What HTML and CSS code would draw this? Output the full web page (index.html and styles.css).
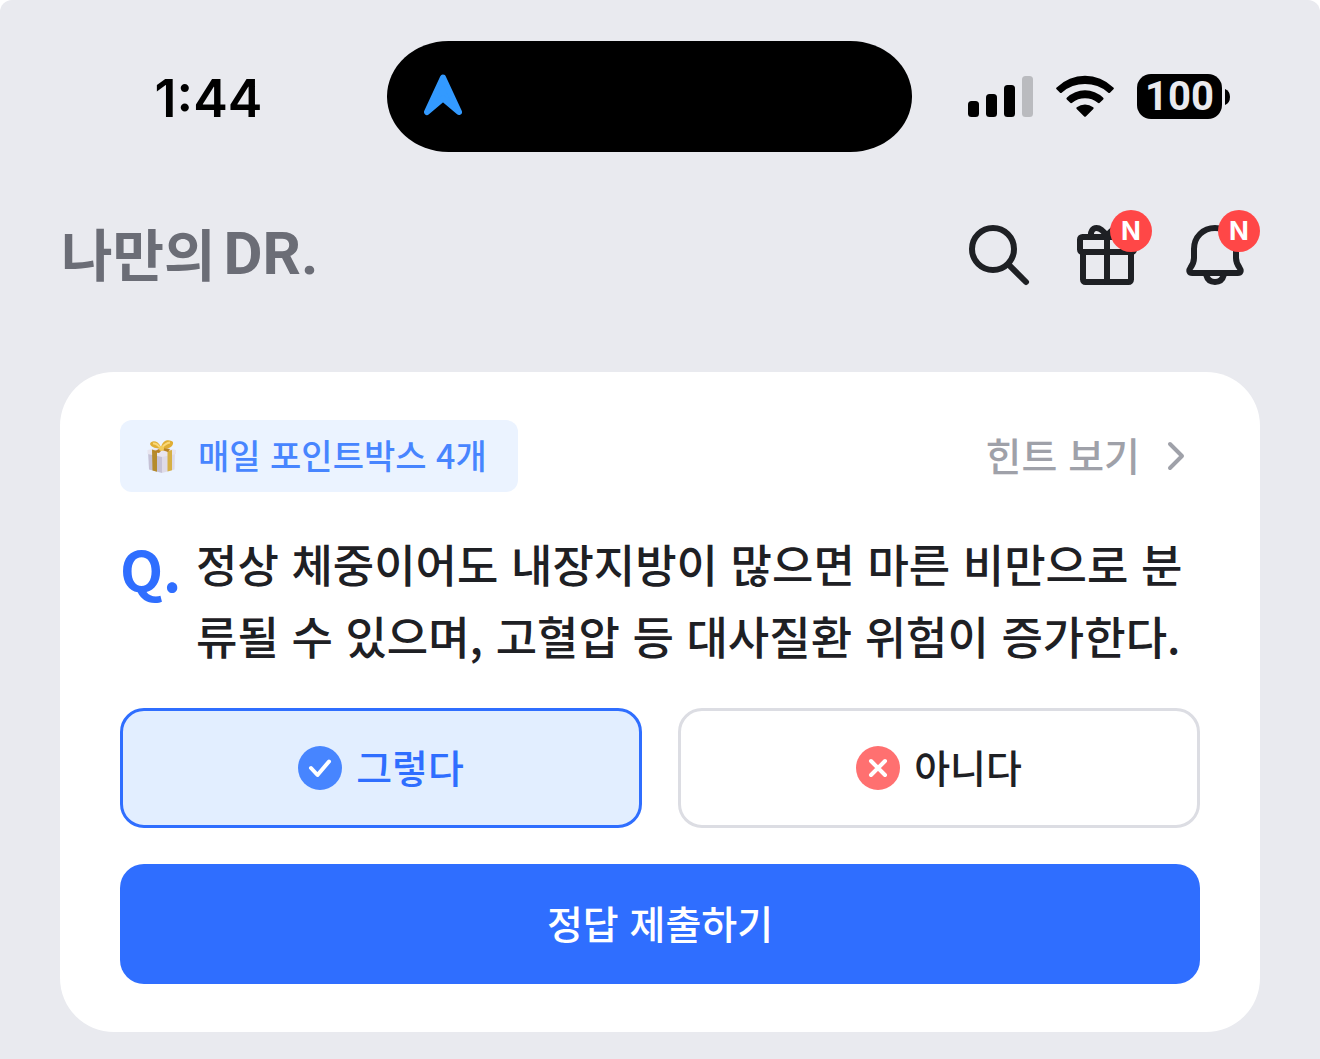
FILE: index.html
```
<!DOCTYPE html>
<html lang="ko">
<head>
  <meta charset="UTF-8" />
  <meta name="viewport" content="width=device-width, initial-scale=1.0" />
  <title>나만의 DR.</title>
  <link rel="stylesheet" href="styles.css">
</head>
<body>
  <div class="screen">
    <div class="status-bar">
      <div class="time">1:44</div>
      <div class="island">
        <svg width="38" height="42" viewBox="0 0 38 42">
          <path d="M19 3.5 L35 38 L19 24.5 L3 38 Z" fill="#339aff" stroke="#339aff" stroke-width="6" stroke-linejoin="round"/>
        </svg>
      </div>
      <div class="status-icons">
        <svg width="65" height="42" viewBox="0 0 65 42">
          <rect x="0" y="25" width="11" height="16" rx="3.5"/>
          <rect x="18" y="18" width="11" height="23" rx="3.5"/>
          <rect x="36" y="9" width="11" height="32" rx="3.5"/>
          <rect x="54" y="0" width="11" height="41" rx="3.5" fill="#babbbf"/>
        </svg>
        <svg width="58" height="44" viewBox="0 0 58 44">
          <path d="M1 12.2A40 40 0 0 1 57 12.2Q58.5 13.2 57.4 14.3L54.2 17.5Q53.2 18.5 52 17.5A35 35 0 0 0 6 17.5Q4.8 18.5 3.8 17.5L.6 14.3Q-.5 13.2 1 12.2Z"/>
          <path d="M11 22.6A26 26 0 0 1 47 22.6Q48.2 23.5 47.2 24.5L44 27.6Q43 28.6 41.8 27.7A21 21 0 0 0 16.2 27.7Q15 28.6 14 27.6L10.8 24.5Q9.8 23.5 11 22.6Z"/>
          <path d="M20.8 32.2A14 14 0 0 1 37.2 32.2Q38.2 33 37.3 33.9L29.8 41.4Q29 42.2 28.2 41.4L20.7 33.9Q19.8 33 20.8 32.2Z"/>
        </svg>
        <div class="battery">
          <span class="battery-level">100</span>
          <svg width="5" height="16" viewBox="0 0 5 16"><path d="M0 0Q5 2 5 8Q5 14 0 16Z"/></svg>
        </div>
      </div>
    </div>

    <header class="header">
      <h1 class="logo">나만의<span class="logo-dr">DR.</span></h1>
      <nav class="actions">
        <button type="button" class="icon-btn" aria-label="검색">
          <svg class="icon" viewBox="0 0 24 24"><circle cx="10" cy="10" r="7"/><path d="M15.2 15.2L21 21"/></svg>
        </button>
        <button type="button" class="icon-btn" aria-label="선물">
          <svg class="icon" viewBox="0 0 24 24">
            <rect x="3" y="6" width="18" height="5" rx=".8"/>
            <rect x="4" y="11" width="16" height="10" rx=".8"/>
            <path d="M12 6v15M6.7 6C6.4 4.2 7.2 3 8.5 3C10 3 11 4.2 12 5.8C13 4.2 14 3 15.5 3C16.8 3 17.6 4.2 17.3 6"/>
          </svg>
          <span class="badge">N</span>
        </button>
        <button type="button" class="icon-btn" aria-label="알림">
          <svg class="icon" viewBox="0 0 24 24">
            <path d="M12 3C8 3 5 6 5 10V13C5 14.6 4.5 15.3 3.8 16.3C3.1 17.3 3.5 18 4.4 18H19.6C20.5 18 20.9 17.3 20.2 16.3C19.5 15.3 19 14.6 19 13V10C19 6 16 3 12 3Z"/>
            <path d="M9 18.5C9.4 20 10.5 21 12 21S14.6 20 15 18.5"/>
          </svg>
          <span class="badge">N</span>
        </button>
      </nav>
    </header>

    <main class="card">
      <div class="card-top">
        <div class="tag">
          <svg width="36" height="36" viewBox="0 0 36 36">
            <path d="M4 13L18 16V35L5 31.5Z" fill="#c6c2d6"/>
            <path d="M18 16L31 13L30.5 31.5L18 35Z" fill="#dedbe8"/>
            <path d="M3.5 12L18 9L32 12V16L18 19L3.5 16Z" fill="#e8e5ef"/>
            <path d="M8 11.5L13 13V33.7L8.5 32.5Z" fill="#b58b2c"/>
            <path d="M23.5 13L28 12V32.3L23.5 33.6Z" fill="#d6b044"/>
            <path d="M17 11C13 10 7 10 6 6C7 2 14 2 17 9C19 1 26 1 29 4C30 9 23 12 17 11Z" fill="#e0ae35"/>
            <path d="M17 10L9 14L15 15L18 12L24 14L26 11Z" fill="#b98325"/>
            <path d="M9 5.5C12 5 14 7 16 9.5M26 4.5C22 5 20 7 18 9.5" fill="none" stroke="#fbd877" stroke-width="2"/>
            <circle cx="17.5" cy="10.5" r="2.5" fill="#f2cb5c"/>
          </svg>
          <span class="label">매일 포인트박스 4개</span>
        </div>
        <a href="#" class="hint">
          <span class="label">힌트 보기</span>
          <svg width="48" height="48" viewBox="0 0 48 48"><path d="M18 12L30 24L18 36"/></svg>
        </a>
      </div>

      <div class="question">
        <span class="q-mark">Q.</span>
        <p class="q-text">정상 체중이어도 내장지방이 많으면 마른 비만으로 분류될 수 있으며, 고혈압 등 대사질환 위험이 증가한다.</p>
      </div>

      <div class="answers">
        <button type="button" class="answer selected" aria-pressed="true">
          <svg width="44" height="44" viewBox="0 0 44 44"><circle cx="22" cy="22" r="22" fill="#4785ff"/><path d="M13 22L19.5 29L31 15.5"/></svg>
          <span class="label">그렇다</span>
        </button>
        <button type="button" class="answer" aria-pressed="false">
          <svg width="44" height="44" viewBox="0 0 44 44"><circle cx="22" cy="22" r="22" fill="#ff7070"/><path d="M15 15L29 29M29 15L15 29"/></svg>
          <span class="label">아니다</span>
        </button>
      </div>

      <button type="button" class="submit"><span class="label">정답 제출하기</span></button>
    </main>
  </div>

  <script>
    const answers = document.querySelectorAll(".answer");

    answers.forEach((btn) => {
      btn.addEventListener("click", () => {
        answers.forEach((a) => {
          a.classList.toggle("selected", a === btn);
          a.setAttribute("aria-pressed", a === btn);
        });
      });
    });
  </script>
</body>
</html>
```
FILE: styles.css
```
* {
  box-sizing: border-box;
}
body {
  margin: 0;
  background: #fff;
  color: #1e2024;
  font-family: 'Noto Sans CJK KR', sans-serif;
  font-weight: 500;
}
button {
  font: inherit;
  color: inherit;
  cursor: pointer;
}
svg {
  display: block;
  flex-shrink: 0;
}
.screen {
  min-height: 100vh;
  padding-bottom: 27px;
  background: #e9eaef;
  border-radius: 12px 12px 0 0;
}
/* the Korean face sits low in its line box */
.label {
  display: block;
  padding-bottom: 4px;
}

/* status bar */
.status-bar {
  display: grid;
  grid-template-columns: 1fr 525px 1fr;
  align-items: center;
  padding: 41px 51px 0 30px;
  color: #000;
}
.time {
  padding-top: 4px;
  text-align: center;
  font-family: Inter, sans-serif;
  font-size: 52px;
  font-weight: 600;
}
.island {
  display: flex;
  align-items: center;
  height: 111px;
  padding: 0 0 4px 37px;
  background: #000;
  border-radius: 62px / 56px;
}
.status-icons {
  display: flex;
  align-items: center;
  justify-content: flex-end;
  gap: 23px;
  padding-right: 39px;
}
.battery {
  display: flex;
  align-items: center;
  gap: 3px;
}
.battery-level {
  width: 85px;
  height: 45px;
  border-radius: 14px;
  background: #000;
  color: #e9eaef;
  font-family: Roboto, sans-serif;
  font-size: 40px;
  font-weight: 700;
  line-height: 46px;
  text-align: center;
}

/* header */
.header {
  display: flex;
  align-items: center;
  justify-content: space-between;
  padding: 67px 69px 81px 61px;
}
.logo {
  display: flex;
  align-items: center;
  gap: 8px;
  margin: 0;
  padding-bottom: 6px;
  color: #6b6d76;
  font-size: 56px;
  font-weight: 700;
  line-height: 60px;
}
.logo-dr {
  padding-top: 4px;
  font-family: Roboto, sans-serif;
  font-size: 60px;
}
.actions {
  display: flex;
  gap: 36px;
}
.icon-btn {
  position: relative;
  padding: 0;
  border: none;
  background: none;
}
.icon {
  width: 72px;
  height: 72px;
  fill: none;
  stroke: #1e2024;
  stroke-width: 2;
  stroke-linecap: round;
  stroke-linejoin: round;
}
.badge {
  position: absolute;
  top: -9px;
  right: -9px;
  width: 42px;
  height: 42px;
  border-radius: 50%;
  background: #ff4747;
  color: #fff;
  font-family: Inter, sans-serif;
  font-size: 26px;
  font-weight: 700;
  line-height: 42px;
  text-align: center;
}

/* quiz card */
.card {
  display: flex;
  flex-direction: column;
  gap: 36px;
  margin: 0 60px;
  padding: 48px 60px;
  background: #fff;
  border-radius: 54px;
}
.card-top {
  display: flex;
  align-items: center;
  justify-content: space-between;
}
.tag {
  display: flex;
  align-items: center;
  gap: 18px;
  height: 72px;
  padding: 0 31px 0 24px;
  border-radius: 12px;
  background: #ebf3ff;
  color: #4785ff;
  font-size: 34px;
}
.hint {
  display: flex;
  align-items: center;
  gap: 12px;
  color: #9fa1a9;
  font-size: 39px;
  line-height: 68px;
  text-decoration: none;
}
.hint svg {
  fill: none;
  stroke: #9fa1a9;
  stroke-width: 4;
  stroke-linecap: round;
  stroke-linejoin: round;
}
.question {
  display: flex;
}
.q-mark {
  flex: 0 0 76px;
  color: #2f6eff;
  font-size: 56px;
  font-weight: 700;
  line-height: 80px;
}
.q-text {
  flex: 1;
  margin: 0;
  font-size: 45px;
  line-height: 72px;
  word-break: break-all;
}
.answers {
  display: flex;
  gap: 36px;
}
.answer {
  flex: 1;
  display: flex;
  align-items: center;
  justify-content: center;
  gap: 14px;
  height: 120px;
  border: 3px solid #dcdde3;
  border-radius: 24px;
  background: #fff;
  font-size: 39px;
}
.answer svg {
  fill: none;
  stroke: #fff;
  stroke-width: 4;
  stroke-linecap: round;
  stroke-linejoin: round;
}
.answer circle {
  stroke: none;
}
.answer.selected {
  border-color: #2f6eff;
  background: #e2eeff;
  color: #2f6eff;
}
.submit {
  height: 120px;
  border: none;
  border-radius: 24px;
  background: #2f6eff;
  color: #fff;
  font-size: 39px;
}
```
